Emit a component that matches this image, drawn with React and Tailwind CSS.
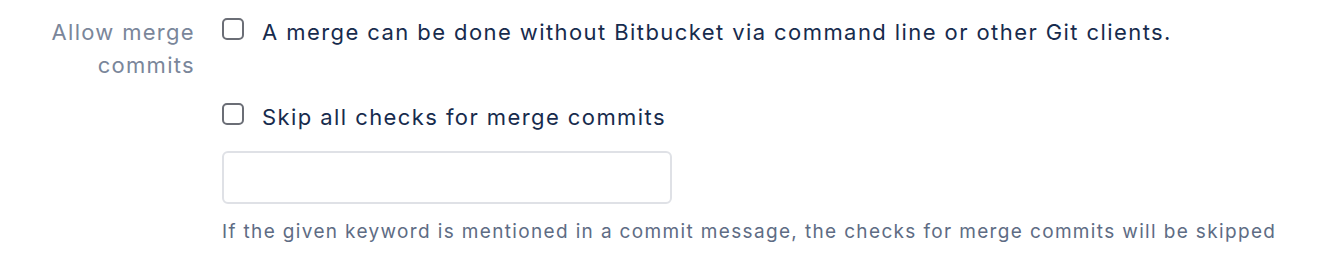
import React from 'react';

function Checkbox() {
  return (
    <span className="mt-[2px] h-[22px] w-[22px] shrink-0 rounded-[5px] border-2 border-[#6b6e76] bg-white" />
  );
}

export default function App() {
  return (
    <div className="h-[262px] w-[1326px] bg-white font-['Inter',sans-serif]">
      <div className="flex pt-[16px]">
        <div className="w-[195px] shrink-0 text-right text-[22px] leading-[33px] tracking-[1.3px] text-[#7a869a]">
          Allow merge
          <br />
          commits
        </div>
        <div className="ml-[27px] flex flex-col">
          <label className="flex items-start gap-[18px]">
            <Checkbox />
            <span className="text-[22px] leading-[33px] tracking-[1.42px] text-[#172b4d]">
              A merge can be done without Bitbucket via command line or other Git clients.
            </span>
          </label>
          <label className="mt-[52px] flex items-start gap-[18px]">
            <Checkbox />
            <span className="text-[22px] leading-[33px] tracking-[1.42px] text-[#172b4d]">
              Skip all checks for merge commits
            </span>
          </label>
          <input
            type="text"
            className="mt-[17px] h-[53px] w-[450px] rounded-[6px] border-2 border-[#dfe1e6] bg-white px-3 outline-none"
          />
          <p className="mt-[14px] text-[19px] leading-[28px] tracking-[1.35px] text-[#5e6c84]">
            If the given keyword is mentioned in a commit message, the checks for merge commits will be skipped
          </p>
        </div>
      </div>
    </div>
  );
}
